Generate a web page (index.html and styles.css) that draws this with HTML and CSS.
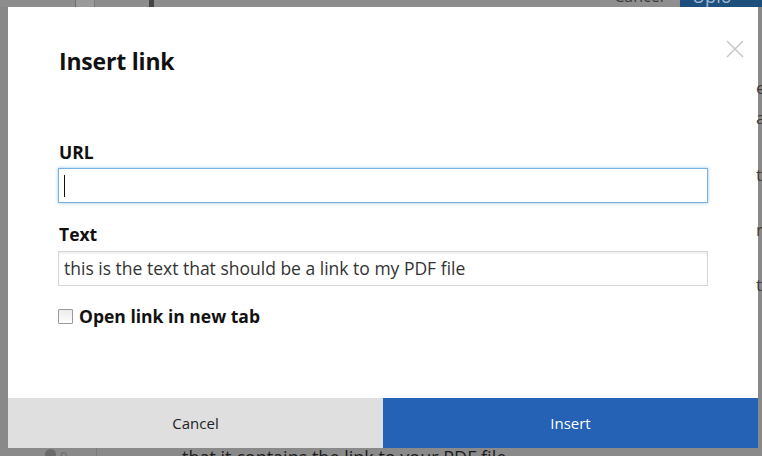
FILE: index.html
```html
<!DOCTYPE html>
<html>
<head>
<meta charset="utf-8">
<link rel="stylesheet" href="styles.css">
</head>
<body>
<div class="page">
  <div class="page-top">
    <div class="bg-thumb"></div>
    <div class="bg-bar"></div>
    <div class="spacer"></div>
    <div class="bg-cancel">Cancel</div>
    <div class="bg-upload">Uplo</div>
  </div>
  <div class="page-mid"></div>
  <div class="page-bottom">
    <span class="bg-votes"><span class="bg-dot"></span>0</span>
    <span class="bg-rule"></span>
    <span class="bg-text">that it contains the link to your PDF file</span>
  </div>
</div>

<div class="modal">
  <div class="modal-body">
    <h1 class="title">Insert link</h1>
    <button class="close" aria-label="Close">
      <svg width="18" height="18" viewBox="0 0 18 18"><path d="M1 1L17 17M17 1L1 17" stroke="#c4c4c4" stroke-width="1.4" fill="none"/></svg>
    </button>
    <label class="label label-url">URL</label>
    <div class="input input-focus"><span class="caret"></span></div>
    <label class="label label-text">Text</label>
    <div class="input input-plain">this is the text that should be a link to my PDF file</div>
    <div class="check-row">
      <span class="checkbox"></span>
      <span class="check-label">Open link in new tab</span>
    </div>
  </div>
  <div class="modal-footer">
    <div class="btn btn-cancel">Cancel</div>
    <div class="btn btn-insert">Insert</div>
  </div>
</div>

<div class="edge-letters">
  <span class="el el1">e</span>
  <span class="el el2">a</span>
  <span class="el el3">t</span>
  <span class="el el4">n</span>
  <span class="el el5">t</span>
</div>
</body>
</html>
```

FILE: styles.css
```css
html, body {
  margin: 0;
  padding: 0;
}
body {
  width: 762px;
  height: 456px;
  overflow: hidden;
  background: #898989;
  font-family: "Open Sans", "DejaVu Sans", sans-serif;
  position: relative;
}

.page {
  display: flex;
  flex-direction: column;
  height: 456px;
}
.page-top {
  height: 7px;
  display: flex;
  overflow: hidden;
  background: #8d8d8d;
}
.bg-thumb {
  width: 18px;
  margin-left: 75px;
  background: #9a9a9a;
  border-left: 1px solid #6f6f6f;
  border-right: 1px solid #7a7a7a;
}
.bg-bar {
  width: 5px;
  margin-left: 54px;
  background: #444;
}
.spacer { flex: 1; }
.bg-cancel {
  width: 78px;
  margin-top: -14px;
  height: 21px;
  text-align: center;
  font-size: 16px;
  line-height: 20px;
  color: #3b3b3b;
  background: #8f8f8f;
}
.bg-upload {
  width: 82px;
  margin-left: 2px;
  margin-top: -14px;
  height: 21px;
  padding-left: 12px;
  box-sizing: border-box;
  font-size: 18px;
  line-height: 20px;
  color: #9db7d0;
  background: #1e4f7c;
}
.page-mid { flex: 1; }
.page-bottom {
  height: 8px;
  display: flex;
  align-items: flex-start;
  overflow: hidden;
  background: #8a8a8a;
}
.bg-votes {
  display: flex;
  align-items: flex-start;
  gap: 4px;
  margin-left: 45px;
  margin-top: 1px;
  font-size: 13px;
  line-height: 14px;
  color: #6a6a6a;
  width: 39px;
}
.bg-dot {
  width: 11px;
  height: 11px;
  border-radius: 50%;
  background: #6a6a6a;
}
.bg-rule {
  width: 1px;
  height: 8px;
  margin-left: 12px;
  background: #7a7a7a;
}
.bg-text {
  margin-left: 85px;
  margin-top: -1px;
  font-size: 18px;
  line-height: 20px;
  color: #1c1c1c;
}

.modal {
  position: absolute;
  left: 8px;
  top: 7px;
  width: 750px;
  height: 441px;
  background: #fff;
  display: flex;
  flex-direction: column;
}
.modal-body {
  flex: 1;
  position: relative;
  padding: 0 50px 0 50px;
}
.title {
  margin: 40px 0 0 1px;
  font-size: 23px;
  font-weight: 700;
  line-height: 28px;
  color: #111;
  letter-spacing: -0.2px;
}
.close {
  position: absolute;
  right: 14px;
  top: 33px;
  width: 18px;
  height: 18px;
  padding: 0;
  border: 0;
  background: none;
}
.close svg { display: block; }
.label {
  display: block;
  font-size: 17.5px;
  font-weight: 700;
  line-height: 22px;
  color: #111;
  margin-left: 1px;
}
.label-url { margin-top: 66px; }
.label-text { margin-top: 20px; }
.input {
  box-sizing: border-box;
  width: 650px;
  height: 35px;
  margin-top: 5px;
  padding: 0 5px;
  font-size: 17.5px;
  line-height: 33px;
  color: #333;
  display: flex;
  align-items: center;
}
.input-focus {
  border: 1px solid #7ab1e4;
  box-shadow: 0 0 3px rgba(102, 170, 230, 0.7);
}
.caret {
  width: 1px;
  height: 22px;
  background: #111;
}
.input-plain {
  margin-top: 6px;
  border: 1px solid #d6d6d6;
  box-shadow: inset 0 2px 2px rgba(0, 0, 0, 0.06);
  height: 35px;
}
.check-row {
  display: flex;
  align-items: center;
  margin-top: 19px;
}
.checkbox {
  box-sizing: border-box;
  width: 15px;
  height: 15px;
  border: 1px solid #9a9a9a;
  background: linear-gradient(#ececec, #fdfdfd);
  border-radius: 1px;
}
.check-label {
  margin-left: 6px;
  font-size: 17.5px;
  font-weight: 700;
  line-height: 22px;
  color: #111;
}

.modal-footer {
  display: flex;
  height: 50px;
}
.btn {
  flex: 1;
  display: flex;
  align-items: center;
  justify-content: center;
  font-size: 15px;
}
.btn-cancel {
  background: #dfdfdf;
  color: #222;
}
.btn-insert {
  background: #2561b4;
  color: #fff;
}

.edge-letters {
  position: absolute;
  left: 756px;
  top: 0;
  width: 6px;
  height: 456px;
  overflow: hidden;
}
.el {
  position: absolute;
  left: 0;
  font-size: 17px;
  line-height: 20px;
  color: #3c3c3c;
}
.el1 { top: 78px; }
.el2 { top: 108px; }
.el3 { top: 165px; }
.el4 { top: 220px; }
.el5 { top: 275px; }
```
